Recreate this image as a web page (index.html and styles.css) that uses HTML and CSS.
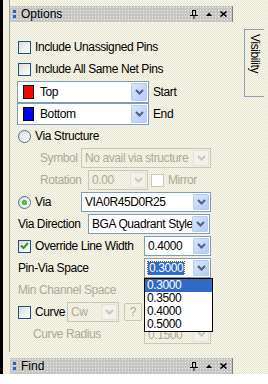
FILE: index.html
```html
<!DOCTYPE html>
<html lang="en">
<head>
    <meta charset="UTF-8">
    <title>Options</title>
    <link rel="stylesheet" href="styles.css">
</head>
<body>
    <div class="window">
        <div class="main">
            <div class="edge"></div>
            <div class="dock">
                <div class="pane">
                    <div class="titlebar">
                        <span class="grip"></span>
                        <span class="title">Options</span>
                        <span class="tools">
                            <svg width="8" height="9" viewBox="0 0 8 9"><path d="M2 0.5h4M2.5 0.5v5M5.5 0.5v5M0 5.5h8M4 5.5v3.5" stroke="#000" fill="none"/></svg>
                            <svg width="6" height="4" viewBox="0 0 6 4"><path d="M0 4L3 0.5L6 4z" fill="#000"/></svg>
                            <svg width="7" height="6" viewBox="0 0 7 6"><path d="M0.5 0.5L6.5 5.5M6.5 0.5L0.5 5.5" stroke="#000" stroke-width="1.6" fill="none"/></svg>
                        </span>
                    </div>

                    <div class="content">
                        <div class="row">
                            <span class="check"></span>
                            <span class="text">Include Unassigned Pins</span>
                        </div>
                        <div class="row">
                            <span class="check"></span>
                            <span class="text">Include All Same Net Pins</span>
                        </div>

                        <div class="layers">
                            <div class="row row-layer">
                                <div class="combo combo-layer">
                                    <span class="swatch swatch-red"></span>
                                    <span class="value">Top</span>
                                    <span class="arrow"><svg width="9" height="6" viewBox="0 0 9 6"><path d="M1 1l3.5 3.5L8 1" stroke="#4d6185" stroke-width="2" fill="none"/></svg></span>
                                </div>
                                <span class="side-label">Start</span>
                            </div>
                            <div class="row row-layer">
                                <div class="combo combo-layer">
                                    <span class="swatch swatch-blue"></span>
                                    <span class="value">Bottom</span>
                                    <span class="arrow"><svg width="9" height="6" viewBox="0 0 9 6"><path d="M1 1l3.5 3.5L8 1" stroke="#4d6185" stroke-width="2" fill="none"/></svg></span>
                                </div>
                                <span class="side-label">End</span>
                            </div>
                        </div>

                        <div class="row">
                            <span class="radio"></span>
                            <span class="text">Via Structure</span>
                        </div>

                        <div class="row">
                            <span class="label label-sub disabled">Symbol</span>
                            <div class="combo combo-via disabled">
                                <span class="value">No avail via structure</span>
                                <span class="arrow"><svg width="9" height="6" viewBox="0 0 9 6"><path d="M1 1l3.5 3.5L8 1" stroke="#c9c7ba" stroke-width="2" fill="none"/></svg></span>
                            </div>
                        </div>

                        <div class="row">
                            <span class="label label-rot disabled">Rotation</span>
                            <div class="combo combo-rot disabled">
                                <span class="value">0.00</span>
                                <span class="arrow"><svg width="9" height="6" viewBox="0 0 9 6"><path d="M1 1l3.5 3.5L8 1" stroke="#c9c7ba" stroke-width="2" fill="none"/></svg></span>
                            </div>
                            <span class="check check-off"></span>
                            <span class="text disabled">Mirror</span>
                        </div>

                        <div class="row">
                            <span class="radio radio-on"></span>
                            <span class="text label-via">Via</span>
                            <div class="combo combo-via">
                                <span class="value">VIA0R45D0R25</span>
                                <span class="arrow"><svg width="9" height="6" viewBox="0 0 9 6"><path d="M1 1l3.5 3.5L8 1" stroke="#4d6185" stroke-width="2" fill="none"/></svg></span>
                            </div>
                        </div>

                        <div class="row">
                            <span class="label label-dir">Via Direction</span>
                            <div class="combo combo-dir">
                                <span class="value">BGA Quadrant Style</span>
                                <span class="arrow"><svg width="9" height="6" viewBox="0 0 9 6"><path d="M1 1l3.5 3.5L8 1" stroke="#4d6185" stroke-width="2" fill="none"/></svg></span>
                            </div>
                        </div>

                        <div class="row">
                            <span class="check check-on"><svg width="9" height="8" viewBox="0 0 9 8"><path d="M1 3.5l2.5 2.5L8 1" stroke="#21a121" stroke-width="2" fill="none"/></svg></span>
                            <span class="text label-wide">Override Line Width</span>
                            <div class="combo combo-num">
                                <span class="value">0.4000</span>
                                <span class="arrow"><svg width="9" height="6" viewBox="0 0 9 6"><path d="M1 1l3.5 3.5L8 1" stroke="#4d6185" stroke-width="2" fill="none"/></svg></span>
                            </div>
                        </div>

                        <div class="row">
                            <span class="label label-num">Pin-Via Space</span>
                            <div class="combo combo-num combo-open">
                                <span class="value"><span class="selected">0.3000</span></span>
                                <span class="arrow"><svg width="9" height="6" viewBox="0 0 9 6"><path d="M1 1l3.5 3.5L8 1" stroke="#4d6185" stroke-width="2" fill="none"/></svg></span>
                                <div class="dropdown">
                                    <div class="option option-active">0.3000</div>
                                    <div class="option">0.3500</div>
                                    <div class="option">0.4000</div>
                                    <div class="option">0.5000</div>
                                </div>
                            </div>
                        </div>

                        <div class="row">
                            <span class="label label-num disabled">Min Channel Space</span>
                        </div>

                        <div class="row">
                            <span class="check"></span>
                            <span class="text label-curve">Curve</span>
                            <div class="combo combo-cw disabled">
                                <span class="value">Cw</span>
                                <span class="arrow"><svg width="9" height="6" viewBox="0 0 9 6"><path d="M1 1l3.5 3.5L8 1" stroke="#c9c7ba" stroke-width="2" fill="none"/></svg></span>
                            </div>
                            <span class="help disabled">?</span>
                        </div>

                        <div class="row">
                            <span class="label label-radius disabled">Curve Radius</span>
                            <div class="combo combo-num disabled">
                                <span class="value value-low">0.1500</span>
                                <span class="arrow"><svg width="9" height="6" viewBox="0 0 9 6"><path d="M1 1l3.5 3.5L8 1" stroke="#c9c7ba" stroke-width="2" fill="none"/></svg></span>
                            </div>
                        </div>
                    </div>
                </div>

                <div class="titlebar titlebar-find">
                    <span class="grip"></span>
                    <span class="title">Find</span>
                    <span class="tools">
                        <svg width="8" height="9" viewBox="0 0 8 9"><path d="M2 0.5h4M2.5 0.5v5M5.5 0.5v5M0 5.5h8M4 5.5v3.5" stroke="#000" fill="none"/></svg>
                        <svg width="6" height="4" viewBox="0 0 6 4"><path d="M0 4L3 0.5L6 4z" fill="#000"/></svg>
                        <svg width="7" height="6" viewBox="0 0 7 6"><path d="M0.5 0.5L6.5 5.5M6.5 0.5L0.5 5.5" stroke="#000" stroke-width="1.6" fill="none"/></svg>
                    </span>
                </div>
            </div>

            <div class="sidebar">
                <div class="tab">Visibility</div>
            </div>
        </div>
        <div class="bottom"></div>
    </div>
</body>
</html>
```

FILE: styles.css
```css
* {
    margin: 0;
    padding: 0;
    box-sizing: border-box;
}

body {
    width: 268px;
    height: 384px;
    overflow: hidden;
    font-family: "Liberation Sans", Arial, sans-serif;
    font-size: 12px;
    letter-spacing: -0.4px;
    color: #000;
    background-color: #f1efdf;
    background-image: repeating-conic-gradient(#fbf7dc 0 25%, #e6e6e2 0 50%);
    background-size: 2px 2px;
}

.window {
    display: flex;
    flex-direction: column;
    height: 384px;
}

.main {
    display: flex;
    height: 374px;
}

.edge {
    width: 3px;
    background-color: #000;
}

.bottom {
    flex: 1;
    background-color: #fff;
}

/* docked panel */
.dock {
    width: 231px;
    display: flex;
    flex-direction: column;
}

.pane {
    margin-left: 6px;
    height: 352px;
    border-left: 1px solid #a09f98;
}

.titlebar {
    display: flex;
    align-items: center;
    height: 16px;
    margin-top: 6px;
    width: 223px;
    border-right: 1px solid #808080;
    background-color: #c6c6c3;
    background-image: radial-gradient(circle, #efefef 0.7px, transparent 0.8px);
    background-size: 3px 3px;
    font-size: 12px;
    letter-spacing: 0;
}

.titlebar-find {
    margin-top: 6px;
    margin-left: 7px;
}

.grip {
    width: 3px;
    height: 8px;
    margin-left: 3px;
    background: repeating-linear-gradient(#2a5cd8 0 3px, transparent 3px 5px);
}

.title {
    margin-left: 5px;
    line-height: 14px;
}

.tools {
    margin-left: auto;
    margin-right: 5px;
    display: flex;
    align-items: center;
    gap: 8px;
}

.content {
    padding-top: 14px;
}

.row {
    display: flex;
    align-items: center;
    height: 22px;
    padding-left: 8px;
    white-space: nowrap;
}

.text {
    margin-left: 4px;
}

.disabled {
    color: #aca899;
}

/* checkboxes and radios */
.check {
    width: 13px;
    height: 13px;
    flex-shrink: 0;
    border: 1px solid #1c5180;
    background: linear-gradient(135deg, #dcdcd7, #fff);
    display: flex;
    align-items: center;
    justify-content: center;
}

.check-off {
    margin-left: 3px;
    border-color: #cac8bb;
    background: #fff;
}

.radio {
    width: 13px;
    height: 13px;
    flex-shrink: 0;
    border: 1px solid #4b6f9b;
    border-radius: 50%;
    background: linear-gradient(135deg, #dcdcd7, #fff);
    display: flex;
    align-items: center;
    justify-content: center;
}

.radio-on::after {
    content: "";
    width: 5px;
    height: 5px;
    border-radius: 50%;
    background: radial-gradient(circle, #5ed15e, #1f9c1f);
}

/* combos */
.combo {
    position: relative;
    display: flex;
    align-items: center;
    height: 20px;
    border: 1px solid #7f9db9;
    background-color: #fff;
    flex-shrink: 0;
}

.combo.disabled {
    border-color: #c9c7ba;
    background-color: transparent;
}

.value {
    flex: 1;
    padding-left: 3px;
    overflow: hidden;
}

.value-low {
    align-self: flex-end;
    line-height: 16px;
}

.arrow {
    width: 16px;
    height: 16px;
    margin-right: 1px;
    display: flex;
    align-items: center;
    justify-content: center;
    background: linear-gradient(135deg, #dae5fd, #b6cbf9);
    border: 1px solid #bacbf2;
    border-radius: 1px;
}

.combo.disabled .arrow {
    background: #f2f1ea;
    border-color: #e4e2d8;
}

.layers {
    margin-top: 1px;
}

.row-layer {
    padding-left: 7px;
}

.combo-layer {
    width: 132px;
    height: 22px;
}

.combo-layer .arrow {
    height: 18px;
}

.swatch {
    width: 11px;
    height: 14px;
    margin-left: 5px;
    border: 1px solid #000;
}

.swatch-red {
    background-color: #f00;
}

.swatch-blue {
    background-color: #00f;
}

.combo-layer .value {
    padding-left: 6px;
}

.side-label {
    margin-left: 4px;
}

.label-sub {
    width: 63px;
    padding-left: 22px;
}

.combo-via {
    width: 130px;
}

.label-rot {
    width: 70px;
    padding-left: 22px;
}

.combo-rot {
    width: 60px;
}

.label-via {
    width: 46px;
}

.label-dir {
    width: 70px;
}

.combo-dir {
    width: 122px;
}

.label-wide {
    width: 109px;
}

.label-num {
    width: 126px;
}

.combo-num {
    width: 67px;
}

.selected {
    display: inline-block;
    background-color: #316ac5;
    color: #fff;
    padding: 0 1px;
    line-height: 13px;
    outline: 1px dotted #7a5a20;
}

.dropdown {
    position: absolute;
    left: -1px;
    top: 19px;
    width: 69px;
    border: 1px solid #000;
    background-color: #fff;
    z-index: 2;
}

.option {
    height: 13px;
    line-height: 13px;
    padding-left: 2px;
}

.option-active {
    background-color: #316ac5;
    color: #fff;
}

.label-curve {
    width: 32px;
}

.combo-cw {
    width: 52px;
}

.help {
    margin-left: 5px;
    width: 18px;
    height: 18px;
    border: 1px solid #c9c7ba;
    border-radius: 2px;
    text-align: center;
    line-height: 16px;
}

.label-radius {
    width: 126px;
    padding-left: 15px;
}

/* right side tab */
.sidebar {
    padding-left: 10px;
    padding-top: 29px;
}

.tab {
    writing-mode: vertical-rl;
    width: 20px;
    height: 68px;
    border: 1px solid #8e9fb3;
    border-right: none;
    padding-top: 4px;
    line-height: 18px;
    font-size: 12px;
}
```
